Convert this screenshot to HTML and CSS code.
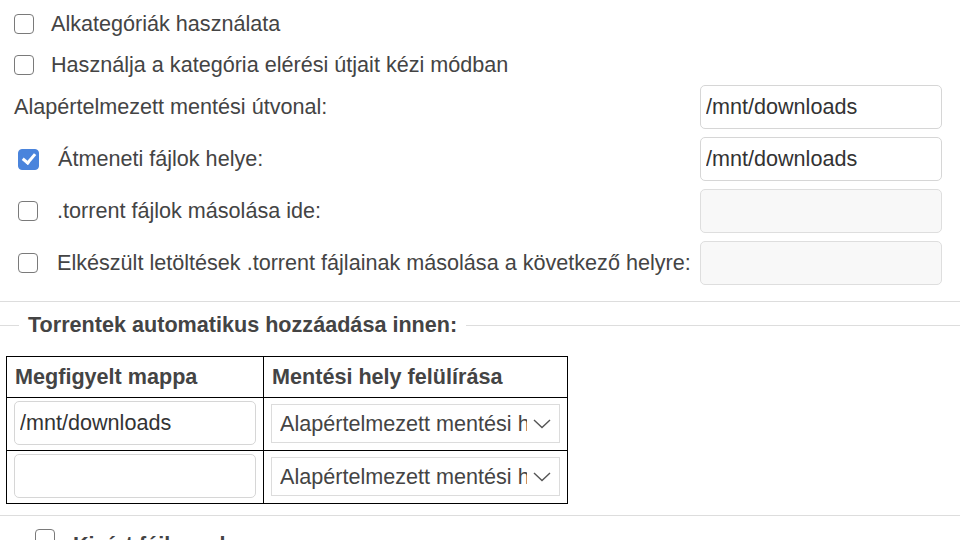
FILE: index.html
```html
<!DOCTYPE html>
<html lang="hu">
<head>
<meta charset="utf-8">
<title>Beállítások</title>
<link rel="stylesheet" href="styles.css">
</head>
<body>
<div class="page">
  <section class="saving">
    <label class="check-row"><input type="checkbox" class="cb"><span>Alkategóriák használata</span></label>
    <label class="check-row"><input type="checkbox" class="cb"><span>Használja a kategória elérési útjait kézi módban</span></label>
    <div class="paths">
      <label class="path-label" for="savepath">Alapértelmezett mentési útvonal:</label>
      <input id="savepath" class="text" type="text" value="/mnt/downloads">
      <label class="path-label boxed"><input type="checkbox" class="cb" checked><span>Átmeneti fájlok helye:</span></label>
      <input class="text" type="text" value="/mnt/downloads">
      <label class="path-label boxed"><input type="checkbox" class="cb"><span>.torrent fájlok másolása ide:</span></label>
      <input class="text" type="text" disabled>
      <label class="path-label boxed"><input type="checkbox" class="cb"><span>Elkészült letöltések .torrent fájlainak másolása a következő helyre:</span></label>
      <input class="text" type="text" disabled>
    </div>
  </section>

  <section class="watched">
    <div class="legend"><span>Torrentek automatikus hozzáadása innen:</span></div>
    <table class="watch-table">
      <thead>
        <tr><th class="col-folder">Megfigyelt mappa</th><th>Mentési hely felülírása</th></tr>
      </thead>
      <tbody>
        <tr>
          <td><input class="text cell-input" type="text" value="/mnt/downloads"></td>
          <td>
            <div class="select-wrap">
              <select class="select"><option>Alapértelmezett mentési hely</option><option>Egyéb…</option></select>
              <svg class="chev" width="18" height="10" viewBox="0 0 18 10"><polyline points="1,1 9,8.5 17,1" fill="none" stroke="#555" stroke-width="1.4"/></svg>
            </div>
          </td>
        </tr>
        <tr>
          <td><input class="text cell-input" type="text" value=""></td>
          <td>
            <div class="select-wrap">
              <select class="select"><option>Alapértelmezett mentési hely</option><option>Egyéb…</option></select>
              <svg class="chev" width="18" height="10" viewBox="0 0 18 10"><polyline points="1,1 9,8.5 17,1" fill="none" stroke="#555" stroke-width="1.4"/></svg>
            </div>
          </td>
        </tr>
      </tbody>
    </table>
  </section>

  <section class="excluded">
    <label class="check-row strong"><input type="checkbox" class="cb"><span>Kizárt fájlnevek</span></label>
  </section>
</div>
</body>
</html>
```

FILE: styles.css
```css
html, body {
  margin: 0;
  padding: 0;
  background: #fff;
}

body {
  font-family: "Liberation Sans", Arial, Helvetica, sans-serif;
  font-size: 21.6px;
  color: #444;
  overflow: hidden;
}

.page {
  width: 960px;
}

/* ---------- checkboxes ---------- */
.cb {
  appearance: none;
  -webkit-appearance: none;
  width: 20px;
  height: 20px;
  margin: 0;
  flex: 0 0 auto;
  border: 1.5px solid #7a7a7a;
  border-radius: 4px;
  background: #fff;
  position: relative;
  box-sizing: border-box;
}

.cb:checked {
  width: 21px;
  height: 21px;
  background: #4a84dc;
  border-color: #4a84dc;
}

.cb:checked::after {
  content: "";
  position: absolute;
  left: 6px;
  top: 1.5px;
  width: 5px;
  height: 10px;
  border-right: 3px solid #fff;
  border-bottom: 3px solid #fff;
  transform: rotate(40deg);
}

.check-row {
  display: flex;
  align-items: center;
  gap: 17px;
  height: 41px;
}

/* ---------- saving section ---------- */
.saving {
  padding: 3px 0 16px 14px;
  border-bottom: 1px solid #ddd;
}

.paths {
  display: grid;
  grid-template-columns: 686px 242px;
  grid-auto-rows: 44px;
  row-gap: 8px;
  align-items: center;
}

.path-label {
  display: flex;
  align-items: center;
}

.path-label.boxed {
  padding-left: 4px;
  gap: 19px;
}

.text {
  box-sizing: border-box;
  height: 44px;
  width: 242px;
  margin: 0;
  padding: 0 5px;
  border: 1px solid #d6d6d6;
  border-radius: 5px;
  background: #fff;
  font-family: inherit;
  font-size: 21.6px;
  color: #333;
}

.text:disabled {
  background: #f8f8f8;
  border-color: #dedede;
}

/* ---------- watched folders ---------- */
.watched {
  padding: 11px 0 11px 0;
  border-bottom: 1px solid #ddd;
}

.legend {
  display: flex;
  align-items: center;
  height: 24px;
}

.legend::before {
  content: "";
  width: 19px;
  border-top: 1px solid #ddd;
}

.legend::after {
  content: "";
  flex: 1;
  border-top: 1px solid #ddd;
}

.legend span {
  padding: 0 9px;
  font-weight: bold;
  white-space: nowrap;
}

.watch-table {
  margin: 19px 0 0 6px;
  border-collapse: collapse;
  border: 1px solid #000;
  width: 562px;
}

.watch-table th,
.watch-table td {
  border: 1px solid #000;
}

.watch-table th {
  text-align: left;
  font-weight: bold;
  padding: 7px 8px 8px;
  line-height: 25px;
  color: #444;
}

.watch-table th.col-folder {
  width: 240px;
}

.watch-table td {
  padding: 3px 6px 5px 7px;
  vertical-align: middle;
}

.cell-input {
  display: block;
  width: 242px;
}

.select-wrap {
  position: relative;
  width: 289px;
}

.select {
  appearance: none;
  -webkit-appearance: none;
  display: block;
  box-sizing: border-box;
  width: 289px;
  height: 39px;
  margin: 0;
  padding: 0 32px 0 8px;
  border: 1px solid #dcdcdc;
  border-radius: 0;
  background: #fff;
  font-family: inherit;
  font-size: 21.6px;
  color: #444;
  white-space: nowrap;
  overflow: hidden;
}

.chev {
  position: absolute;
  right: 9px;
  top: 15px;
  pointer-events: none;
}

/* ---------- excluded ---------- */
.excluded {
  padding: 13px 0 0 35px;
}

.check-row.strong {
  align-items: flex-start;
  height: auto;
  gap: 18px;
  font-weight: bold;
  line-height: 25px;
}

.check-row.strong span {
  padding-top: 3px;
}
```
